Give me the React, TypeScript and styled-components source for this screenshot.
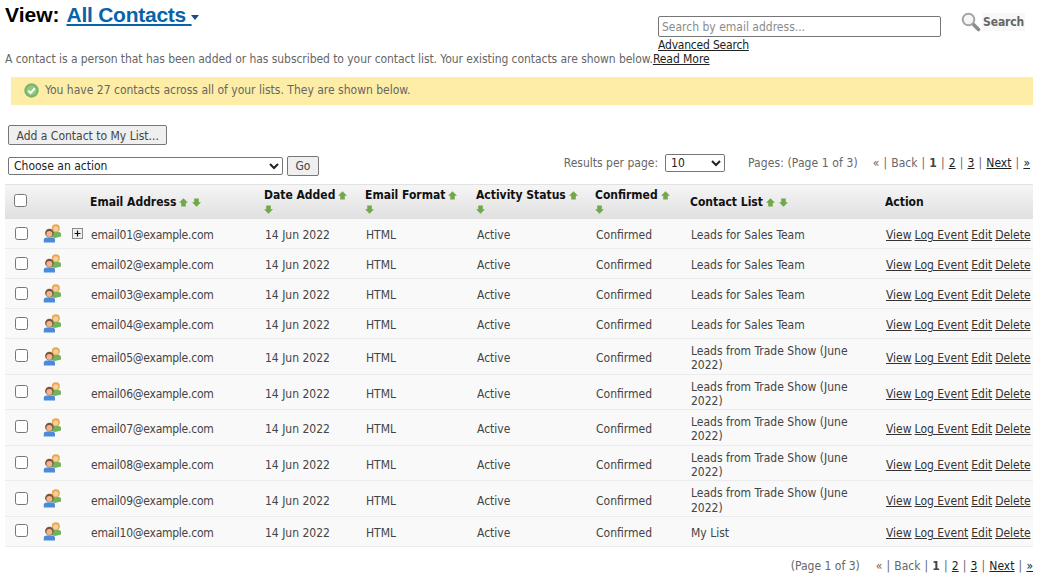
import React from 'react';
import styled, { createGlobalStyle } from 'styled-components';

const GlobalStyle = createGlobalStyle`
  html, body {
    margin: 0;
    padding: 0;
    background: #fff;
  }
  body {
    font-family: 'DejaVu Sans Condensed', 'DejaVu Sans', sans-serif;
    font-size: 12px;
    color: #444;
  }
`;

const Page = styled.div`
  width: 1047px;
  height: 579px;
  overflow: hidden;
  box-sizing: border-box;
  padding: 0 14px 0 5px;
`;

const TopBar = styled.div`
  display: flex;
  justify-content: space-between;
  height: 52px;
`;

const Title = styled.h1`
  margin: 0;
  padding-top: 2px;
  font-family: 'Liberation Sans', sans-serif;
  font-size: 21px;
  line-height: 26px;
  font-weight: bold;
  color: #000;
`;

const TitleLink = styled.a`
  color: #0a62a8;
  text-decoration: underline;
  margin-left: 7px;
  letter-spacing: -0.25px;
  white-space: pre;
`;

const Caret = styled.span`
  display: inline-block;
  margin-left: -1px;
  vertical-align: 2px;
  border-left: 4.5px solid transparent;
  border-right: 4.5px solid transparent;
  border-top: 5px solid #1d4a82;
`;

const SearchArea = styled.div`
  display: flex;
  flex-direction: column;
  width: 375px;
  padding-top: 16px;
`;

const SearchRow = styled.div`
  display: flex;
  align-items: flex-start;
`;

const SearchInput = styled.input`
  box-sizing: border-box;
  width: 283px;
  height: 21px;
  padding: 0 3px;
  border: 1px solid #767676;
  border-radius: 2px;
  font: inherit;
  &::placeholder {
    color: #8b8b8b;
  }
`;

const SearchButton = styled.div`
  display: flex;
  align-items: center;
  gap: 1px;
  margin: -4px 0 0 20px;
`;

const SearchLabel = styled.span`
  padding: 2px 1px;
  background: #f8f8f8;
  font-size: 12px;
  font-weight: bold;
  letter-spacing: -0.1px;
  color: #666;
`;

const PlainLink = styled.a`
  color: #222;
  text-decoration: underline;
`;

const AdvancedLine = styled.div`
  line-height: 15px;
  margin-top: 1px;
  letter-spacing: -0.2px;
`;

const Intro = styled.p`
  margin: 0;
  line-height: 14px;
  letter-spacing: -0.06px;
  color: #666;
`;

const Notice = styled.div`
  display: flex;
  align-items: center;
  gap: 6px;
  box-sizing: border-box;
  height: 28px;
  margin: 11px 0 0 6px;
  padding: 0 0 2px 13px;
  background: #feeda6;
  color: #666;
`;

const Toolbar = styled.div`
  padding: 20px 0 0 3px;
`;

const PlainButton = styled.button`
  box-sizing: border-box;
  height: 20px;
  padding: 1px 7.5px 0;
  border: 1px solid #767676;
  border-radius: 2px;
  background: #efefef;
  color: #444;
  font: inherit;
`;

const ActionRow = styled.div`
  display: flex;
  justify-content: space-between;
  align-items: center;
  height: 21px;
  margin: 10px 0 8px 3px;
`;

const ActionGroup = styled.div`
  display: flex;
  align-items: center;
  gap: 4px;
`;

const Dropdown = styled.select<{ $width: number }>`
  box-sizing: border-box;
  width: ${p => p.$width}px;
  height: 18px;
  padding-left: 1px;
  border: 1px solid #767676;
  border-radius: 2px;
  background: #fff;
  color: #222;
  font: inherit;
`;

const Pager = styled.div`
  display: flex;
  align-items: center;
  margin: 0 3px 6px 0;
  color: #666;
`;

const ResultsLabel = styled.span`
  margin-right: 7px;
`;

const PagesLabel = styled.span`
  margin: 0 15px 0 23px;
  letter-spacing: 0.1px;
`;

const PageLinks = styled.span`
  word-spacing: 0.7px;
  white-space: nowrap;
`;

const CurrentPage = styled.b`
  color: #444;
`;

const Table = styled.table`
  width: 1028px;
  table-layout: fixed;
  border-collapse: separate;
  border-spacing: 0;
`;

const HeadRow = styled.tr`
  height: 35px;
  background: linear-gradient(#f6f6f6, #e0e0e0);
`;

const HeadCell = styled.th<{ $width: number }>`
  box-sizing: border-box;
  width: ${p => p.$width}px;
  padding: 3px 5px 3px 4px;
  border-top: 1px solid #e2e2e2;
  text-align: left;
  font-size: 12px;
  line-height: 14px;
  font-weight: bold;
  color: #111;
`;

const FlushHeadCell = styled(HeadCell)`
  padding: 0;
`;

const Row = styled.tr`
  height: 30px;
  background: #f9f9f9;
`;

const Cell = styled.td`
  box-sizing: border-box;
  padding: 5px 5px 1px;
  border-bottom: 1px solid #ececec;
  line-height: 14.3px;
  color: #444;
  vertical-align: middle;
`;

const IconCell = styled(Cell)`
  padding: 0;
`;

const EmailCell = styled(Cell)`
  letter-spacing: -0.25px;
`;

const ActionCell = styled(Cell)`
  white-space: nowrap;
`;

const TightLink = styled(PlainLink)`
  color: #333;
  margin-right: 3px;
  &:last-child {
    margin-right: 0;
  }
`;

const Check = styled.input`
  display: block;
  margin: 0 0 1px 10px;
`;

const HeadCheck = styled(Check)`
  margin: 0 0 3px 9px;
`;

const ExpandBox = styled.svg`
  display: block;
  margin: 0 0 0 5px;
`;

const PersonIcon = styled.svg`
  display: block;
  margin: 0 0 0 7px;
`;

const ArrowIcon = styled.svg`
  display: inline-block;
  vertical-align: -1px;
`;

const FirstArrow = styled(ArrowIcon)`
  margin-left: 3px;
`;

const Footer = styled.div`
  display: flex;
  justify-content: flex-end;
  align-items: center;
  gap: 16px;
  height: 37px;
  padding-top: 2px;
  box-sizing: border-box;
  color: #666;
`;

const UpArrow = () => (
  <FirstArrow width="9" height="9" viewBox="0 0 9 9">
    <path d="M4.5 0.3 L9 4.8 H6.8 V8.6 H2.2 V4.8 H0 Z" fill="#73a84a" />
  </FirstArrow>
);

const DownArrow = () => (
  <ArrowIcon width="9" height="9" viewBox="0 0 9 9">
    <path d="M4.5 8.7 L9 4.2 H6.8 V0.4 H2.2 V4.2 H0 Z" fill="#73a84a" />
  </ArrowIcon>
);

const SortHead = ({ label, width }: { label: string; width: number }) => (
  <HeadCell $width={width}>
    {label}
    <UpArrow /> <DownArrow />
  </HeadCell>
);

const People = () => (
  <PersonIcon width="19" height="19" viewBox="0 0 19 19">
    <path d="M8 13 V9.5 C8 8.4 10 7.8 13 7.8 C16 7.8 18 8.4 18 9.5 V12.5 L12 14 Z" fill="#6fb35f" />
    <circle cx="12.8" cy="4.2" r="4" fill="#e8a84a" />
    <circle cx="12.8" cy="4.8" r="2.6" fill="#f5cfa4" />
    <circle cx="6.4" cy="9" r="4.3" fill="#7d5238" />
    <circle cx="6.4" cy="10" r="3" fill="#eeb58f" />
    <path d="M0.8 18.4 V15.4 C0.8 13.9 3 13.2 6.4 13.2 C9.8 13.2 12 13.9 12 15.4 V18.4 Z" fill="#4a8ad8" />
  </PersonIcon>
);

const Expand = () => (
  <ExpandBox width="11" height="11" viewBox="0 0 11 11">
    <rect x="0.5" y="0.5" width="10" height="10" fill="#f0f0f0" stroke="#8a8a8a" />
    <path d="M2.5 5.5 H8.5 M5.5 2.5 V8.5" stroke="#111" strokeWidth="1.2" />
  </ExpandBox>
);

const OkIcon = () => (
  <svg width="15" height="15" viewBox="0 0 15 15">
    <circle cx="7.5" cy="7.5" r="7.2" fill="#79b56a" />
    <circle cx="7.5" cy="7.5" r="5" fill="#8fca80" />
    <path d="M4.2 7.6 L6.6 10 L10.9 5.3" fill="none" stroke="#fff" strokeWidth="2" />
  </svg>
);

const MagnifierIcon = () => (
  <svg width="20" height="20" viewBox="0 0 20 20">
    <path d="M11.5 11.5 L17.5 17.5" stroke="#8c8c8c" strokeWidth="3.6" strokeLinecap="round" />
    <circle cx="7.5" cy="7.5" r="5.8" fill="#f4f6f7" stroke="#a4a4a4" strokeWidth="2" />
  </svg>
);

const PageNav = () => (
  <PageLinks>
    « | Back | <CurrentPage>1</CurrentPage> | <PlainLink>2</PlainLink> | <PlainLink>3</PlainLink> |{' '}
    <PlainLink>Next</PlainLink> | <PlainLink>»</PlainLink>
  </PageLinks>
);

const salesList = 'Leads for Sales Team';
const showList = 'Leads from Trade Show (June 2022)';

const contacts = [
  { email: 'email01@example.com', list: salesList, expandable: true },
  { email: 'email02@example.com', list: salesList },
  { email: 'email03@example.com', list: salesList },
  { email: 'email04@example.com', list: salesList },
  { email: 'email05@example.com', list: showList },
  { email: 'email06@example.com', list: showList },
  { email: 'email07@example.com', list: showList },
  { email: 'email08@example.com', list: showList },
  { email: 'email09@example.com', list: showList },
  { email: 'email10@example.com', list: 'My List' },
];

export default function App() {
  return (
    <Page>
      <GlobalStyle />
      <TopBar>
        <Title>
          View:<TitleLink>All Contacts </TitleLink>
          <Caret />
        </Title>
        <SearchArea>
          <SearchRow>
            <SearchInput placeholder="Search by email address..." />
            <SearchButton>
              <MagnifierIcon />
              <SearchLabel>Search</SearchLabel>
            </SearchButton>
          </SearchRow>
          <AdvancedLine>
            <PlainLink>Advanced Search</PlainLink>
          </AdvancedLine>
        </SearchArea>
      </TopBar>
      <Intro>
        A contact is a person that has been added or has subscribed to your contact list. Your existing contacts
        are shown below.<PlainLink>Read More</PlainLink>
      </Intro>
      <Notice>
        <OkIcon />
        You have 27 contacts across all of your lists. They are shown below.
      </Notice>
      <Toolbar>
        <PlainButton>Add a Contact to My List...</PlainButton>
      </Toolbar>
      <ActionRow>
        <ActionGroup>
          <Dropdown $width={275}>
            <option>Choose an action</option>
          </Dropdown>
          <PlainButton>Go</PlainButton>
        </ActionGroup>
        <Pager>
          <ResultsLabel>Results per page:</ResultsLabel>
          <Dropdown $width={60}>
            <option>10</option>
          </Dropdown>
          <PagesLabel>Pages: (Page 1 of 3)</PagesLabel>
          <PageNav />
        </Pager>
      </ActionRow>
      <Table>
        <thead>
          <HeadRow>
            <FlushHeadCell $width={31}>
              <HeadCheck type="checkbox" />
            </FlushHeadCell>
            <HeadCell $width={31} />
            <HeadCell $width={19} />
            <SortHead label="Email Address" width={174} />
            <SortHead label="Date Added" width={101} />
            <SortHead label="Email Format" width={111} />
            <SortHead label="Activity Status" width={119} />
            <SortHead label="Confirmed" width={95} />
            <SortHead label="Contact List" width={195} />
            <HeadCell $width={152}>Action</HeadCell>
          </HeadRow>
        </thead>
        <tbody>
          {contacts.map(c => (
            <Row key={c.email}>
              <IconCell>
                <Check type="checkbox" />
              </IconCell>
              <IconCell>
                <People />
              </IconCell>
              <IconCell>{c.expandable && <Expand />}</IconCell>
              <EmailCell>{c.email}</EmailCell>
              <Cell>14 Jun 2022</Cell>
              <Cell>HTML</Cell>
              <Cell>Active</Cell>
              <Cell>Confirmed</Cell>
              <Cell>{c.list}</Cell>
              <ActionCell>
                <TightLink>View</TightLink>
                <TightLink>Log Event</TightLink>
                <TightLink>Edit</TightLink>
                <TightLink>Delete</TightLink>
              </ActionCell>
            </Row>
          ))}
        </tbody>
      </Table>
      <Footer>
        <span>(Page 1 of 3)</span>
        <PageNav />
      </Footer>
    </Page>
  );
}
